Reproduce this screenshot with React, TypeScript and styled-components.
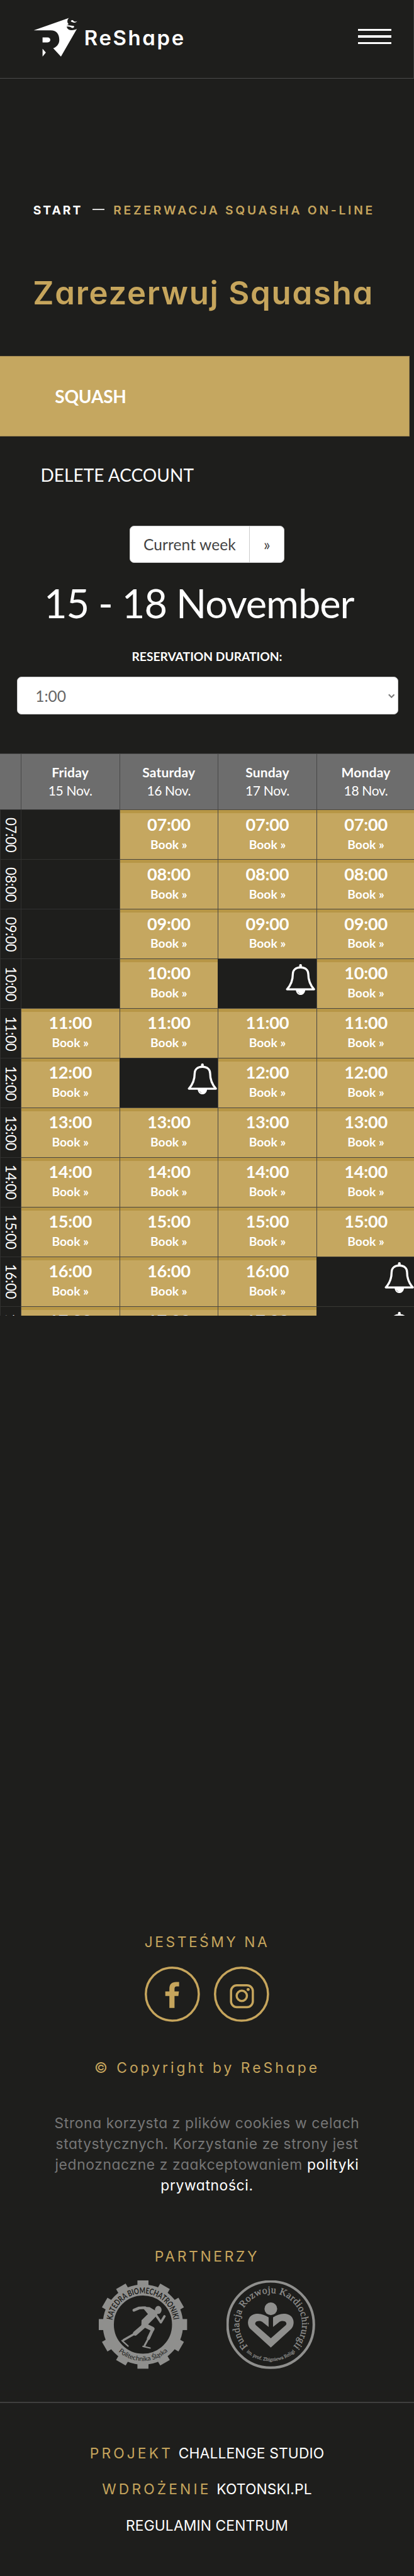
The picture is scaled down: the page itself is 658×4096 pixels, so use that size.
import React from "react";
import styled, { createGlobalStyle } from "styled-components";

const SCALE = 0.8774;
const u = (n: number) => `${+(n * SCALE).toFixed(3)}px`;

const color = {
  bg: "#1e1e1c",
  gold: "#c5a760",
  goldDark: "#b79646",
  brand: "#c6a55c",
  head: "#6d6d6d",
  line: "#4a4741",
  dimLine: "#313130",
  rule: "#3f3f3e",
  muted: "#767676",
  stamp: "#8f8f8d",
};
const wide = `Inter, "Open Sans", sans-serif`;
const body = `Lato, "Open Sans", sans-serif`;

const GlobalStyle = createGlobalStyle`
  html, body { margin: 0; background: ${color.bg}; }
  * { box-sizing: border-box; }
  h1, h2, p { margin: 0; font-weight: 400; }
  a { color: inherit; text-decoration: none; }
`;

const Page = styled.div`
  width: 100%;
  min-height: 4096px;
  overflow: hidden;
  background: ${color.bg};
  color: #fff;
  font-family: ${body};
  white-space: nowrap;
`;

const Header = styled.header`
  display: flex;
  align-items: flex-start;
  justify-content: space-between;
  height: ${u(142)};
  padding: ${u(32)} ${u(40)} 0 ${u(60)};
  border-bottom: 1px solid #4b4b4a;
  border-right: 1px solid #3a3a39;
`;
const Brand = styled.a`
  display: flex;
  gap: ${u(12.5)};
`;
const BrandMark = styled.svg`
  width: ${u(80)};
  height: ${u(72)};
  fill: #fff;
`;
const BrandName = styled.span`
  height: ${u(72)};
  line-height: ${u(73)};
  font-family: ${wide};
  font-feature-settings: "cv11";
  font-size: ${u(37.5)};
  font-weight: 600;
  letter-spacing: ${u(3)};
`;
const Burger = styled.button`
  display: flex;
  flex-direction: column;
  justify-content: space-between;
  width: ${u(60)};
  height: ${u(28)};
  margin-top: ${u(20)};
  padding: 0;
  border: 0;
  background: none;
`;
const BurgerBar = styled.i`
  height: ${u(4)};
  background: #fff;
`;

const Breadcrumb = styled.nav`
  display: flex;
  align-items: center;
  height: ${u(40)};
  margin: ${u(218.5)} 0 0 ${u(60)};
  font-family: ${wide};
  font-size: ${u(22)};
  font-weight: 600;
  letter-spacing: ${u(4.25)};
  color: ${color.brand};
`;
const Home = styled.a`
  width: ${u(108)};
  font-weight: 700;
  letter-spacing: ${u(3.4)};
  color: #fff;
`;
const Dash = styled.i`
  width: ${u(21)};
  height: ${u(2)};
  margin: 0 ${u(16.5)} ${u(2)} 0;
  background: #d8d8d8;
`;
const PageTitle = styled.h1`
  margin: ${u(95.5)} 0 0 ${u(59.5)};
  line-height: ${u(70)};
  font-family: ${wide};
  font-feature-settings: "cv11";
  font-size: ${u(58)};
  font-weight: 600;
  letter-spacing: ${u(2)};
  color: ${color.brand};
`;

const ActiveTab = styled.a`
  display: flex;
  align-items: center;
  width: ${u(742.5)};
  height: ${u(146)};
  margin-top: ${u(79)};
  padding-left: ${u(99.5)};
  border: 1px solid #9c8450;
  border-left: 0;
  background: ${color.gold};
  font-size: ${u(32)};
  font-weight: 700;
  letter-spacing: ${u(-0.3)};
`;
const AccountLink = styled.a`
  display: flex;
  align-items: center;
  height: ${u(140)};
  padding-left: ${u(73.5)};
  font-size: ${u(32)};
`;

const WeekSwitch = styled.div`
  display: flex;
  width: ${u(281.5)};
  height: ${u(67)};
  margin: ${u(22)} auto 0;
  border: 1px solid #ccc;
  border-radius: ${u(8)};
  background: #fff;
  overflow: hidden;
`;
const WeekButton = styled.button<{ $grow?: boolean }>`
  flex: ${(p) => (p.$grow ? "1" : `0 0 ${u(63)}`)};
  padding: 0;
  border: 0;
  border-left: ${(p) => (p.$grow ? "0" : "1px solid #ccc")};
  background: none;
  color: #444;
  font-family: ${body};
  font-size: ${u(28)};
  letter-spacing: ${u(0.1)};
`;
const WeekTitle = styled.h2`
  margin-top: ${u(33.5)};
  padding-right: ${u(29)};
  line-height: ${u(80)};
  font-size: ${u(72)};
  letter-spacing: ${u(-1.2)};
  text-align: center;
`;
const FieldLabel = styled.div`
  margin-top: ${u(41.5)};
  line-height: ${u(30)};
  font-size: ${u(22)};
  font-weight: 700;
  letter-spacing: ${u(-0.06)};
  text-align: center;
`;
const SelectBox = styled.div`
  display: flex;
  align-items: center;
  justify-content: space-between;
  height: ${u(69)};
  margin: ${u(21)} ${u(29)} 0 ${u(31)};
  padding: ${u(1)} ${u(5)} 0 ${u(32)};
  border: 1px solid #ccc;
  border-radius: ${u(8)};
  background: #fff;
  color: #666;
  font-size: ${u(28)};
`;
const Chevron = styled.svg`
  width: ${u(12)};
  height: ${u(8)};
  fill: none;
  stroke: #7b7b7b;
  stroke-width: 2.4;
`;

const Calendar = styled.section`
  height: ${u(1019)};
  margin-top: ${u(70.5)};
  overflow: hidden;
`;
const Row = styled.div<{ $head?: boolean }>`
  display: grid;
  grid-template-columns: ${u(37.5)} repeat(4, ${u(178.5)});
  height: ${(p) => u(p.$head ? 102 : 90)};
`;
const DayHead = styled.div`
  padding-top: ${u(15.5)};
  border-left: 1px solid #484848;
  border-top: 1px solid #484848;
  background: ${color.head};
  line-height: ${u(34)};
  font-size: ${u(24)};
  text-align: center;
  &:first-child { border-left: 0; }
`;
const DayName = styled.div`
  font-weight: 700;
  letter-spacing: ${u(0.2)};
`;
const DayDate = styled.div`
  letter-spacing: ${u(-0.4)};
`;
const HourLabel = styled.div`
  display: flex;
  align-items: center;
  justify-content: center;
  border-left: 1px solid ${color.dimLine};
  border-top: 1px solid ${color.dimLine};
  font-size: ${u(25.5)};
  line-height: 1;
  letter-spacing: ${u(-0.5)};
  writing-mode: vertical-rl;
`;
const FreeSlot = styled.a`
  padding-top: ${u(7)};
  border-left: 1px solid ${color.line};
  border-top: 1px solid ${color.line};
  background: linear-gradient(${color.goldDark} ${u(5.2)}, ${color.gold} ${u(5.2)});
  line-height: ${u(36.4)};
  font-weight: 700;
  text-align: center;
`;
const SlotTime = styled.div`
  font-size: ${u(31)};
  letter-spacing: ${u(-0.3)};
`;
const SlotAction = styled.div`
  font-size: ${u(22)};
`;
const PastSlot = styled.div`
  border-left: 1px solid ${color.dimLine};
  border-top: 1px solid ${color.dimLine};
`;
const TakenSlot = styled.div`
  display: flex;
  justify-content: flex-end;
  padding: ${u(9)} ${u(1)} 0 0;
  border-top: 1px solid #3a3935;
`;
const BellIcon = styled.svg`
  width: ${u(54)};
  height: ${u(56)};
`;

const Footer = styled.footer`
  display: flex;
  flex-direction: column;
  align-items: center;
  margin-top: ${u(1115.5)};
  font-family: ${wide};
  font-feature-settings: "cv11";
  font-size: ${u(26)};
  line-height: ${u(40)};
`;
const FooterHeading = styled.div`
  letter-spacing: ${u(4)};
  color: ${color.brand};
`;
const Socials = styled.div`
  display: flex;
  gap: ${u(25)};
  margin-top: ${u(24)};
`;
const SocialLink = styled.a`
  display: flex;
  width: ${u(100)};
  height: ${u(100)};
`;
const SocialIcon = styled.svg`
  width: 100%;
  height: 100%;
  fill: none;
  stroke: ${color.brand};
`;
const Copyright = styled.div`
  margin-top: ${u(64)};
  letter-spacing: ${u(4.6)};
  color: ${color.brand};
`;
const Notice = styled.p`
  margin-top: ${u(61.5)};
  line-height: ${u(37.5)};
  letter-spacing: ${u(0.72)};
  text-align: center;
  color: ${color.muted};
`;
const NoticeLink = styled.a`
  color: #fff;
`;
const PartnersHeading = styled(FooterHeading)`
  margin-top: ${u(90.5)};
  letter-spacing: ${u(4.2)};
`;
const Partners = styled.div`
  display: flex;
  gap: ${u(71)};
  margin-top: ${u(23)};
`;
const Stamp = styled.svg`
  width: ${u(160)};
  height: ${u(160)};
`;
const Credits = styled.div`
  display: flex;
  flex-direction: column;
  align-items: center;
  width: 100%;
  margin-top: ${u(60)};
  padding-top: ${u(59.5)};
  border-top: 2px solid ${color.rule};
  line-height: ${u(65.1)};
`;
const CreditLine = styled.div`
  display: flex;
  gap: ${u(10)};
`;
const CreditRole = styled.span`
  letter-spacing: ${u(4.7)};
  color: ${color.brand};
`;
const CreditLink = styled.a`
  letter-spacing: ${u(0.15)};
`;

const Bell = () => (
  <BellIcon viewBox="0 0 54 56">
    <path
      d="M27 6C17.500 6 13 11.500 13 18C13 30 10 37.500 2.500 45.700H51.500C44 37.500 41 30 41 18C41 11.500 36.500 6 27 6Z"
      fill="none"
      stroke="#fff"
      strokeWidth="3.800"
      strokeLinejoin="round"
    />
    <rect x="24.600" y="0" width="4.800" height="6" rx="2" fill="#fff" />
    <path d="M18.500 46H35.500C35.500 52 32 56 27 56S18.500 52 18.500 46Z" fill="#fff" />
    <path d="M22 50Q23.200 53 25.500 53.500" stroke="#777" strokeWidth="0.800" fill="none" />
  </BellIcon>
);

const RunnerStamp = () => (
  <Stamp viewBox="0 0 160 160">
    <defs>
      <path id="runner-top" d="M24.400 73A56 56 0 0 1 135.600 73" />
      <path id="runner-bottom" d="M28 121A66.500 66.500 0 0 0 132 121" />
    </defs>
    {Array.from({ length: 12 }, (_, i) => (
      <rect key={i} x="70" y="0" width="20" height="20" fill={color.stamp} transform={`rotate(${i * 30} 80 80)`} />
    ))}
    <circle cx="80" cy="80" r="62.700" fill={color.bg} stroke={color.stamp} strokeWidth="20" />
    <text fontFamily="Lato, sans-serif" fontWeight="700" fontSize="15" fill={color.bg}>
      <textPath href="#runner-top" startOffset="1" textLength="160" lengthAdjust="spacingAndGlyphs">
        KATEDRA BIOMECHATRONIKI
      </textPath>
    </text>
    <text fontFamily="Lato, sans-serif" fontSize="12" fill={color.bg}>
      <textPath href="#runner-bottom" startOffset="11" textLength="98">Politechnika Śląska</textPath>
    </text>
    <ellipse cx="107.700" cy="53.500" rx="6" ry="7.300" fill={color.stamp} />
    <path d="M78 47.500L92 48.500L103 55L107 60L102 67L89 80L77 83L77.500 72L89 61Z" fill={color.stamp} />
    <g fill="none" stroke={color.stamp} strokeLinecap="round" strokeLinejoin="round">
      <path d="M63.500 54L73 50L84 49.500" strokeWidth="5" />
      <path d="M103 62L112.500 76L119 65" strokeWidth="4.200" />
      <path d="M80 84L66 96" strokeWidth="8" />
      <path d="M66 96L45 108" strokeWidth="4" />
      <path d="M42 109L53 119" strokeWidth="2.500" />
      <path d="M83 81L97 88" strokeWidth="8" />
      <path d="M97 90L90 105" strokeWidth="5.500" />
      <path d="M90 105L83 118" strokeWidth="3.500" />
      <path d="M80 119.500L93 122.500" strokeWidth="2.500" />
    </g>
  </Stamp>
);

const HeartStamp = () => (
  <Stamp viewBox="0 0 160 160">
    <defs>
      <path id="heart-top" d="M39.700 120.300A57 57 0 1 1 120.300 120.300" />
      <path id="heart-bottom" d="M32 125.500A66 66 0 0 0 128 125.500" />
    </defs>
    <circle cx="80" cy="80" r="78.200" fill="none" stroke={color.stamp} strokeWidth="4.600" />
    <text fontFamily='"Liberation Serif", serif' fontSize="18" fill={color.stamp} stroke={color.stamp} strokeWidth="0.400">
      <textPath href="#heart-top" startOffset="1" textLength="266">Fundacja Rozwoju Kardiochirurgii</textPath>
    </text>
    <text fontFamily='"Liberation Serif", serif' fontSize="9" fill={color.stamp} stroke={color.stamp} strokeWidth="0.300">
      <textPath href="#heart-bottom" startOffset="6" textLength="96">im. prof. Zbigniewa Religi</textPath>
    </text>
    <circle cx="80.300" cy="51.500" r="11.500" fill={color.stamp} />
    <path
      d="M80.300 121.700L43.500 88C36 80 38 66 48 62C58 58 68 61.500 76.300 67V84.300L64.500 75C58 71 49 75 53 81L80.300 105L107.600 81C111.600 75 102.600 71 96.100 75L84.300 84.300V67C92.600 61.500 102.600 58 112.600 62C122.600 66 124.600 80 117.100 88Z"
      fill={color.stamp}
    />
  </Stamp>
);

const days = [
  ["Friday", "15 Nov."],
  ["Saturday", "16 Nov."],
  ["Sunday", "17 Nov."],
  ["Monday", "18 Nov."],
];

type SlotState = "free" | "taken" | "past";
const F: SlotState = "free";
const T: SlotState = "taken";
const P: SlotState = "past";
const schedule: { hour: string; slots: SlotState[] }[] = [
  { hour: "07:00", slots: [P, F, F, F] },
  { hour: "08:00", slots: [P, F, F, F] },
  { hour: "09:00", slots: [P, F, F, F] },
  { hour: "10:00", slots: [P, F, T, F] },
  { hour: "11:00", slots: [F, F, F, F] },
  { hour: "12:00", slots: [F, T, F, F] },
  { hour: "13:00", slots: [F, F, F, F] },
  { hour: "14:00", slots: [F, F, F, F] },
  { hour: "15:00", slots: [F, F, F, F] },
  { hour: "16:00", slots: [F, F, F, T] },
  { hour: "17:00", slots: [F, F, F, T] },
];

const Slot = ({ state, hour }: { state: SlotState; hour: string }) => {
  if (state === "past") return <PastSlot />;
  if (state === "taken") return <TakenSlot><Bell /></TakenSlot>;
  return (
    <FreeSlot>
      <SlotTime>{hour}</SlotTime>
      <SlotAction>Book »</SlotAction>
    </FreeSlot>
  );
};

export default function App() {
  return (
    <Page>
      <GlobalStyle />
      <Header>
        <Brand>
          <BrandMark viewBox="30 24 240 216">
            <path d="M32 93L224 26C213 35 212 51 222 60C216 62 213 66 213 68L212 76C216 88 228 93 240 92.500C252 92 260 90 267 85L180 236L138 191C162 180 171 164 171 145C171 112 155 93 125 93Z" />
            <path d="M235 40C240 36 247 37 249 43C254 47 262 47 268 43C264 50 258 53 250 51L238 47C234 45 233 42 235 40Z" />
            <path d="M213 65L232 67C240 70 250 66 252 73C251 81 240 83 236 78C232 73 222 74 212 73Z" />
            <path d="M80 132H107Q122 133 122 145.500Q122 158 107 159H80Z" />
            <path d="M80 193L98 214L80 236Z" />
          </BrandMark>
          <BrandName>ReShape</BrandName>
        </Brand>
        <Burger aria-label="Menu">
          <BurgerBar />
          <BurgerBar />
          <BurgerBar />
        </Burger>
      </Header>

      <Breadcrumb>
        <Home>START</Home>
        <Dash />
        <span>REZERWACJA SQUASHA ON-LINE</span>
      </Breadcrumb>
      <PageTitle>Zarezerwuj Squasha</PageTitle>

      <ActiveTab>SQUASH</ActiveTab>
      <AccountLink>DELETE ACCOUNT</AccountLink>

      <WeekSwitch>
        <WeekButton $grow>Current week</WeekButton>
        <WeekButton>»</WeekButton>
      </WeekSwitch>
      <WeekTitle>15 - 18 November</WeekTitle>
      <FieldLabel>RESERVATION DURATION:</FieldLabel>
      <SelectBox>
        1:00
        <Chevron viewBox="0 0 12 8">
          <path d="M1 1.500L6 6.500L11 1.500" />
        </Chevron>
      </SelectBox>

      <Calendar>
        <Row $head>
          <DayHead />
          {days.map(([name, date]) => (
            <DayHead key={name}>
              <DayName>{name}</DayName>
              <DayDate>{date}</DayDate>
            </DayHead>
          ))}
        </Row>
        {schedule.map(({ hour, slots }) => (
          <Row key={hour}>
            <HourLabel>{hour}</HourLabel>
            {slots.map((state, i) => (
              <Slot key={i} state={state} hour={hour} />
            ))}
          </Row>
        ))}
      </Calendar>

      <Footer>
        <FooterHeading>JESTEŚMY NA</FooterHeading>
        <Socials>
          <SocialLink aria-label="Facebook">
            <SocialIcon viewBox="0 0 100 100">
              <circle cx="50" cy="50" r="48" strokeWidth="4" />
              <path
                d="M44.700 75V53.300H37.300V45H44.700V40C44.700 32 49 28 57 28H62.300V36H58C55 36 54 37.500 54 40.500V45H62L61 53.300H54V75Z"
                fill={color.brand}
                stroke="none"
              />
            </SocialIcon>
          </SocialLink>
          <SocialLink aria-label="Instagram">
            <SocialIcon viewBox="0 0 100 100">
              <circle cx="50" cy="50" r="48" strokeWidth="4" />
              <rect x="31" y="34" width="39.500" height="39.500" rx="10.500" strokeWidth="4" />
              <circle cx="50.500" cy="53" r="9.300" strokeWidth="4" />
              <circle cx="62" cy="41.500" r="2.800" fill={color.brand} stroke="none" />
            </SocialIcon>
          </SocialLink>
        </Socials>
        <Copyright>© Copyright by ReShape</Copyright>
        <Notice>
          Strona korzysta z plików cookies w celach
          <br />
          statystycznych. Korzystanie ze strony jest
          <br />
          jednoznaczne z zaakceptowaniem <NoticeLink>polityki</NoticeLink>
          <br />
          <NoticeLink>prywatności.</NoticeLink>
        </Notice>
        <PartnersHeading>PARTNERZY</PartnersHeading>
        <Partners>
          <RunnerStamp />
          <HeartStamp />
        </Partners>
        <Credits>
          <CreditLine>
            <CreditRole>PROJEKT</CreditRole>
            <CreditLink>CHALLENGE STUDIO</CreditLink>
          </CreditLine>
          <CreditLine>
            <CreditRole>WDROŻENIE</CreditRole>
            <CreditLink>KOTONSKI.PL</CreditLink>
          </CreditLine>
          <CreditLine>
            <CreditLink>REGULAMIN CENTRUM</CreditLink>
          </CreditLine>
        </Credits>
      </Footer>
    </Page>
  );
}
